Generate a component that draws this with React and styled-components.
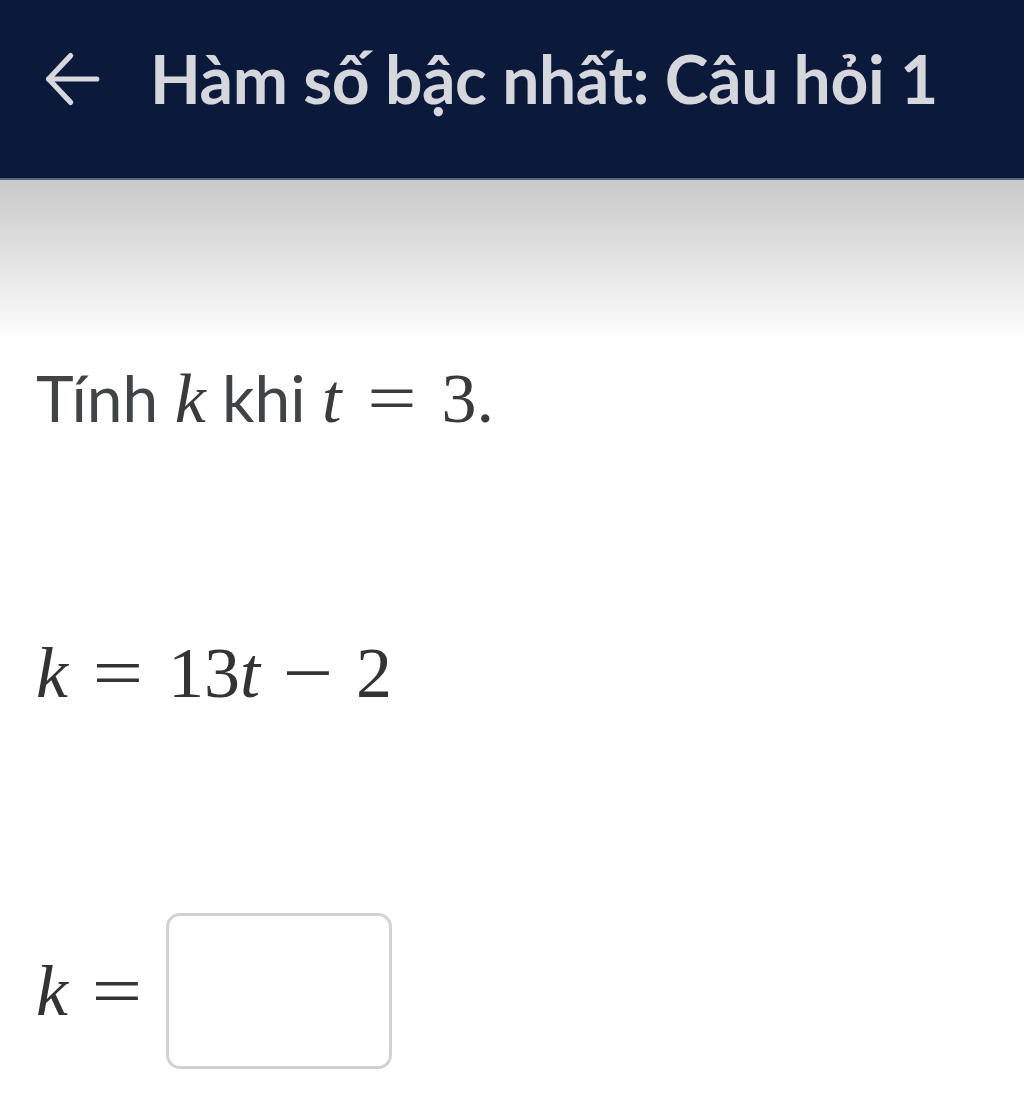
import styled, { createGlobalStyle } from 'styled-components';

const Global = createGlobalStyle`
  html, body {
    margin: 0;
    padding: 0;
    background: #ffffff;
  }
  body {
    font-family: Lato, "Noto Sans", sans-serif;
  }
`;

const Page = styled.div`
  width: 1024px;
  min-height: 1108px;
  background: #ffffff;
  overflow: hidden;
`;

const Header = styled.header`
  height: 180px;
  background: #0b1a3b;
  border-bottom: 2px solid #5a6478;
  display: flex;
  align-items: center;
  padding: 0 0 20px 38px;
  gap: 44px;
  box-sizing: border-box;
`;

const BackButton = styled.button`
  background: none;
  border: none;
  padding: 0;
  width: 68px;
  height: 68px;
  display: flex;
  align-items: center;
  justify-content: center;
  color: #d6d8de;
`;

const Title = styled.h1`
  margin: 0;
  font-family: Lato, "Noto Sans", sans-serif;
  font-weight: 700;
  font-size: 66px;
  line-height: 80px;
  color: #d5d7dd;
  letter-spacing: -0.4px;
  white-space: nowrap;
`;

const Shade = styled.div`
  height: 160px;
  background: linear-gradient(to bottom, #c9c9c9 0%, #e0e0e0 45%, #f6f6f6 85%, #ffffff 100%);
`;

const Content = styled.main`
  padding: 0 0 0 36px;
  display: flex;
  flex-direction: column;
`;

const Question = styled.p`
  margin: 18px 0 0;
  font-size: 64px;
  color: #414446;
  line-height: 80px;
  white-space: nowrap;
`;

const Math = styled.span`
  font-family: "Liberation Serif", "DejaVu Serif", serif;
  font-size: 70px;
  color: #3a3a3a;
  font-style: ${(p) => (p.italic ? 'italic' : 'normal')};
`;

const Formula = styled.div`
  margin-top: 194px;
  font-family: "Liberation Serif", "DejaVu Serif", serif;
  font-size: 72px;
  color: #333333;
  line-height: 80px;
  white-space: nowrap;
`;

const AnswerRow = styled.div`
  margin-top: 200px;
  display: flex;
  align-items: center;
  font-family: "Liberation Serif", "DejaVu Serif", serif;
  font-size: 72px;
  color: #333333;
`;

const Input = styled.input`
  width: 226px;
  height: 156px;
  box-sizing: border-box;
  border: 3px solid #d2d2d2;
  border-radius: 14px;
  background: #ffffff;
  outline: none;
`;

// operators are wider in the KaTeX-like reference font
const Op = styled.span`
  display: inline-block;
  width: ${(p) => p.w || 100}px;
  text-align: center;
  font-style: normal;
  transform: scaleX(1.25);
`;

const I = styled.i`
  font-style: italic;
`;

export default function App() {
  return (
    <Page>
      <Global />
      <Header>
        <BackButton aria-label="Quay lại">
          <svg width="66" height="66" viewBox="0 0 24 24" fill="none" stroke="currentColor" strokeWidth="1.9" strokeLinecap="round" strokeLinejoin="round">
            <path d="M21 12H3.5" />
            <path d="M11.5 3.5L3.5 12l8 8.5" />
          </svg>
        </BackButton>
        <Title>Hàm số bậc nhất: Câu hỏi 1</Title>
      </Header>
      <Shade />
      <Content>
        <Question>
          Tính <Math italic>k</Math> khi <Math italic>t</Math>
          <Math>
            <Op w={100}>=</Op>3.
          </Math>
        </Question>
        <Formula>
          <I>k</I>
          <Op w={100}>=</Op>
          13<I>t</I>
          <Op w={96}>−</Op>2
        </Formula>
        <AnswerRow>
          <I>k</I>
          <Op w={98}>=</Op>
          <Input aria-label="k" />
        </AnswerRow>
      </Content>
    </Page>
  );
}
